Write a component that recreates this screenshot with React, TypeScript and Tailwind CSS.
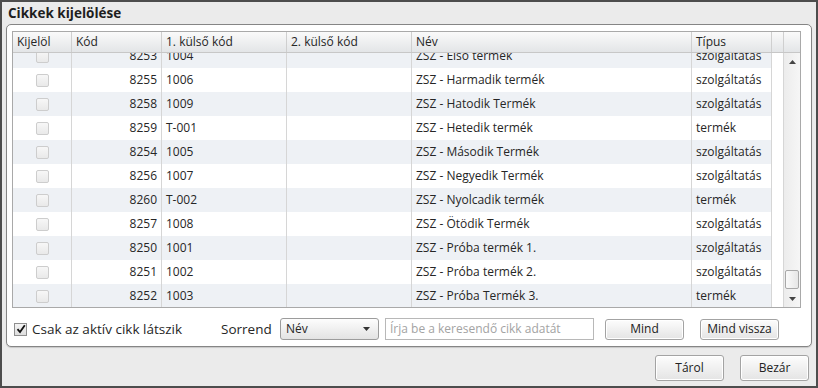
import React from 'react';

interface Row {
  kod: string;
  kulso1: string;
  nev: string;
  tipus: string;
}

const rows: Row[] = [
  { kod: '8253', kulso1: '1004', nev: 'ZSZ - Első termék', tipus: 'szolgáltatás' },
  { kod: '8255', kulso1: '1006', nev: 'ZSZ - Harmadik termék', tipus: 'szolgáltatás' },
  { kod: '8258', kulso1: '1009', nev: 'ZSZ - Hatodik Termék', tipus: 'szolgáltatás' },
  { kod: '8259', kulso1: 'T-001', nev: 'ZSZ - Hetedik termék', tipus: 'termék' },
  { kod: '8254', kulso1: '1005', nev: 'ZSZ - Második Termék', tipus: 'szolgáltatás' },
  { kod: '8256', kulso1: '1007', nev: 'ZSZ - Negyedik Termék', tipus: 'szolgáltatás' },
  { kod: '8260', kulso1: 'T-002', nev: 'ZSZ - Nyolcadik termék', tipus: 'termék' },
  { kod: '8257', kulso1: '1008', nev: 'ZSZ - Ötödik Termék', tipus: 'szolgáltatás' },
  { kod: '8250', kulso1: '1001', nev: 'ZSZ - Próba termék 1.', tipus: 'szolgáltatás' },
  { kod: '8251', kulso1: '1002', nev: 'ZSZ - Próba termék 2.', tipus: 'szolgáltatás' },
  { kod: '8252', kulso1: '1003', nev: 'ZSZ - Próba Termék 3.', tipus: 'termék' },
];

const cols = 'grid grid-cols-[59px_90px_125px_125px_280px_80px_12px]';

const Btn: React.FC<{ label: string; className?: string }> = ({ label, className }) => (
  <button
    className={`flex items-center justify-center rounded-[3px] border border-[#a3a3a3] bg-gradient-to-b from-[#fdfdfd] to-[#e4e4e4] text-[12px] text-[#222] shadow-[inset_0_0_0_1px_#ffffff] ${className ?? ''}`}
  >
    {label}
  </button>
);

const App: React.FC = () => {
  return (
    <div
      className="w-[818px] h-[388px] border-2 border-[#4d4d4d] bg-[#ebebeb] flex flex-col text-[#262626]"
      style={{ fontFamily: '"Open Sans", "Noto Sans", sans-serif' }}
    >
      <div className="h-[22px] pl-[6px] flex items-center text-[13.5px] font-bold text-[#1e1e1e]">Cikkek kijelölése</div>

      <div className="mx-[4px] h-[323px] rounded-[5px] border border-[#858585] bg-white shadow-[0_1px_1px_rgba(0,0,0,0.15)] flex flex-col">
        {/* grid */}
        <div className="ml-[5px] mt-[6px] w-[789px] h-[277px] border border-[#a9a9a9] flex flex-col">
          <div className="h-[21px] flex bg-gradient-to-b from-[#fafafa] to-[#e3e5e7] border-b border-[#c7c7c7] text-[12px]">
            <div className={`${cols} flex-none`}>
              {['Kijelöl', 'Kód', '1. külső kód', '2. külső kód', 'Név', 'Típus', ''].map((h, i) => (
                <div key={i} className="pl-[4px] flex items-center border-r border-[#cfcfcf] leading-none">
                  {h}
                </div>
              ))}
            </div>
            <div className="flex-1" />
          </div>
          <div className="flex flex-1 overflow-hidden">
            <div className="flex-1 overflow-hidden">
              <div className="-mt-[9px]">
                {rows.map((r, i) => (
                  <div key={r.kod} className={`${cols} h-[24px] text-[12px] ${i % 2 === 0 ? 'bg-[#eef1f5]' : 'bg-white'}`}>
                    <div className="flex items-center justify-center border-r border-[#d6d6d6]">
                      <span className="block w-[13px] h-[13px] rounded-[2px] border border-[#cdcdcd] bg-gradient-to-b from-[#f7f7f7] to-[#e9e9e9]" />
                    </div>
                    <div className="flex items-center justify-end pr-[4px] border-r border-[#d6d6d6]">{r.kod}</div>
                    <div className="flex items-center pl-[4px] border-r border-[#d6d6d6]">{r.kulso1}</div>
                    <div className="flex items-center pl-[4px] border-r border-[#d6d6d6]" />
                    <div className="flex items-center pl-[4px] border-r border-[#d6d6d6]">{r.nev}</div>
                    <div className="flex items-center pl-[4px] border-r border-[#d6d6d6]">{r.tipus}</div>
                    <div className="bg-white border-r border-[#d6d6d6]" />
                  </div>
                ))}
              </div>
            </div>
            {/* scrollbar */}
            <div className="w-[16px] flex flex-col bg-gradient-to-r from-[#ececec] to-[#f6f6f6]">
              <div className="h-[18px] flex items-center justify-center">
                <svg width="7" height="4" viewBox="0 0 7 4"><path d="M0 4 L3.5 0 L7 4 Z" fill="#444" /></svg>
              </div>
              <div className="flex-1 flex flex-col justify-end pb-[2px]">
                <div className="mx-[1px] h-[19px] rounded-[2px] border border-[#a8a8a8] bg-gradient-to-r from-[#fafafa] to-[#e6e6e6]" />
              </div>
              <div className="h-[16px] flex items-center justify-center">
                <svg width="7" height="4" viewBox="0 0 7 4"><path d="M0 0 L7 0 L3.5 4 Z" fill="#444" /></svg>
              </div>
            </div>
          </div>
        </div>

        {/* controls */}
        <div className="mt-[10px] ml-[7px] flex items-center h-[22px]">
          <div className="w-[207px] flex items-center">
            <span className="w-[13px] h-[13px] border border-[#8f8f8f] bg-gradient-to-b from-[#f4f4f4] to-[#dedede] flex items-center justify-center">
              <svg width="10" height="10" viewBox="0 0 10 10">
                <path d="M1.5 5.2 L4 8 L8.8 1.2" stroke="#111" strokeWidth="1.8" fill="none" />
              </svg>
            </span>
            <span className="ml-[5px] text-[13.5px]">Csak az aktív cikk látszik</span>
          </div>
          <div className="w-[59px] text-[13.5px]">Sorrend</div>
          <div className="w-[99px] h-[22px] rounded-[3px] border border-[#9c9c9c] bg-gradient-to-b from-[#fdfdfd] to-[#e3e3e3] flex items-center justify-between pl-[5px] pr-[8px] text-[12px]">
            <span>Név</span>
            <svg width="7" height="4" viewBox="0 0 7 4"><path d="M0 0 L7 0 L3.5 4 Z" fill="#333" /></svg>
          </div>
          <div className="ml-[6px] w-[209px] h-[22px] border border-[#b8b8b8] bg-white flex items-center pl-[4px] text-[12px] text-[#a3a3a3]">
            Írja be a keresendő cikk adatát
          </div>
          <Btn label="Mind" className="ml-[11px] w-[79px] h-[21px]" />
          <Btn label="Mind vissza" className="ml-[16px] w-[79px] h-[21px]" />
        </div>
      </div>

      <div className="flex justify-end gap-[16px] pr-[7px] mt-[8px]">
        <Btn label="Tárol" className="w-[69px] h-[26px]" />
        <Btn label="Bezár" className="w-[69px] h-[26px]" />
      </div>
    </div>
  );
};

export default App;
